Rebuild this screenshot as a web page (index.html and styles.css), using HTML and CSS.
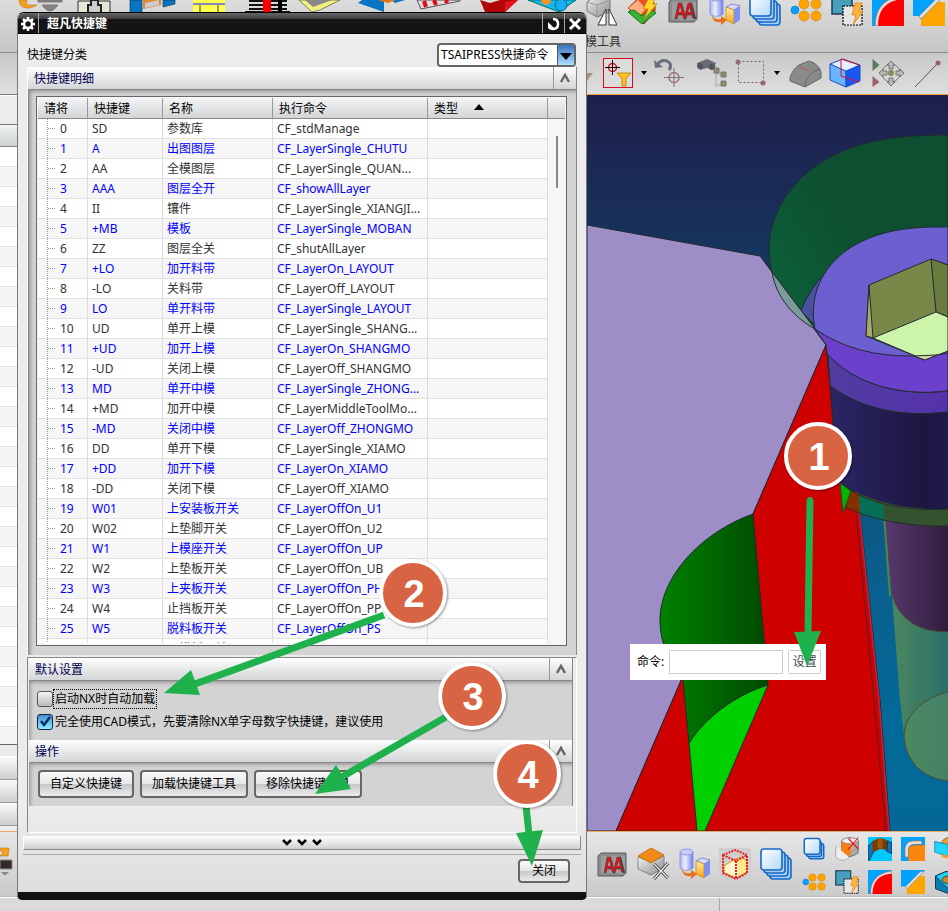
FILE: index.html
```
<!DOCTYPE html>
<html lang="zh-CN">
<head>
<meta charset="utf-8">
<title>超凡快捷键</title>
<link rel="stylesheet" href="styles.css">
</head>
<body>
<svg class="defs" aria-hidden="true">
  <defs>
    <linearGradient id="gBlue" x1="0" y1="0" x2="1" y2="1"><stop offset="0" stop-color="#fff"/><stop offset="1" stop-color="#b4d8fa"/></linearGradient>
    <linearGradient id="gPrism" x1="0" y1="0" x2="1" y2="0"><stop offset="0" stop-color="#a9b4f4"/><stop offset=".4" stop-color="#eef0ff"/><stop offset="1" stop-color="#6f80ee"/></linearGradient>
    <linearGradient id="gGold" x1="0" y1="0" x2="0" y2="1"><stop offset="0" stop-color="#fff0a0"/><stop offset="1" stop-color="#f9a010"/></linearGradient>
    <linearGradient id="gGrey" x1="0" y1="0" x2="1" y2="1"><stop offset="0" stop-color="#f4f4f4"/><stop offset="1" stop-color="#8a8a8a"/></linearGradient>
    <symbol id="i-aa" viewBox="0 0 32 32"><path d="M2 8l3-3h25v20l-3 3H2z" fill="#8c8c8c" stroke="#5a5a5a"/><path d="M5 8h24v18l-24-1z" fill="#9c9c9c"/><path d="M9 25L12 10h2l4 15M10 20h6M18 25l4-15h2l4 15M20 20h6" fill="none" stroke="#444" stroke-width="2.500"/><path d="M9 24L12.500 10h1L17 24M10.500 19h5M18 24l3.500-14h1L26 24M19.500 19h5" fill="none" stroke="#d8141c" stroke-width="1.800"/></symbol>
    <symbol id="i-prism" viewBox="0 0 32 32"><path d="M2 4v16c2 3 10 3 13 0V4z" fill="url(#gPrism)" stroke="#7583d6" stroke-width=".7"/><ellipse cx="8.500" cy="4" rx="6.500" ry="3" fill="#c4cdfa" stroke="#7583d6" stroke-width=".7"/><path d="M18 13l6-3 8 2-6 4z" fill="#d8dcff" stroke="#5c6ac0" stroke-width=".7"/><path d="M18 13l8 3v14l-8-4z" fill="url(#gGold)" stroke="#c98210" stroke-width=".7"/><path d="M26 16l6-4v14l-6 4z" fill="#7d91ef"/><path d="M4 20c1 5 5 6 9 5v-3l6 4-6 5v-3C6 29 4 25 4 20z" fill="#e8701c"/></symbol>
    <symbol id="i-stack" viewBox="0 0 32 32"><g fill="#a9cdf0" stroke="#1468c8" stroke-width="1.600"><rect x="10" y="10" width="21" height="21" rx="3"/><rect x="7" y="7" width="21" height="21" rx="3"/><rect x="4" y="4" width="21" height="21" rx="3"/><rect x="1" y="1" width="21" height="21" rx="3" fill="url(#gBlue)"/></g></symbol>
    <symbol id="i-stack2" viewBox="0 0 32 32"><g fill="#a9cdf0" stroke="#1468c8" stroke-width="2"><rect x="9" y="9" width="20" height="20" rx="3"/><rect x="6" y="6" width="20" height="20" rx="3"/><rect x="3" y="2" width="21" height="21" rx="3" fill="url(#gBlue)"/></g></symbol>
    <symbol id="i-dots" viewBox="0 0 32 32"><g fill="#ffa200" stroke="#d08000" stroke-width=".6"><circle cx="14" cy="10" r="5"/><circle cx="26" cy="10" r="5"/><circle cx="14" cy="22" r="5"/><circle cx="26" cy="22" r="5"/></g><circle cx="5" cy="16" r="4" fill="#08a0f8" stroke="#0878c0" stroke-width=".6"/></symbol>
    <symbol id="i-flash" viewBox="0 0 32 32"><rect x="1" y="1" width="20" height="19" fill="#46a0bd" stroke="#1c3c50" stroke-width="1.500"/><rect x="12" y="12" width="19" height="19" fill="#e6e6e6" stroke="#000" stroke-width="1.200" stroke-dasharray="2 1"/><path d="M24 9h7l-3 8h4L22 31l3-10h-4z" fill="#ffb43c" stroke="#d87810" stroke-width=".7"/></symbol>
    <symbol id="i-redcorner" viewBox="0 0 32 32"><path d="M0 0h32v32H0z" fill="#00a2ff"/><path d="M3 32C3 14 12 4 32 1v31z" fill="#d9d9d9" stroke="#777"/><path d="M6 32C6 16 14 6 32 5v27z" fill="#fe0000"/></symbol>
    <symbol id="i-chamfer" viewBox="0 0 32 32"><path d="M0 0h32L14 22H0z" fill="#00a2ff"/><path d="M8 32V24L24 8h8v24z" fill="#ffa400"/><path d="M6 22L26 2h5L8 25z" fill="#ddd" stroke="#888" stroke-width=".8"/></symbol>
    <symbol id="i-orangecorner" viewBox="0 0 32 32"><path d="M0 0h32v32H0z" fill="#00a2ff"/><path d="M5 27V17Q5 5 17 5h11v5H18q-8 0-8 8v9z" fill="#dedede" stroke="#666"/><path d="M10 32V19q0-8 9-8h13v21z" fill="#f8850c"/></symbol>
    <symbol id="i-bend" viewBox="0 0 32 32"><path d="M0 0h32v32H0z" fill="#00c8ff"/><path d="M0 12L8 5v13L2 31H0z" fill="#0878b8" stroke="#024"/><path d="M6 6Q17-3 27 6l-1 13q-8-7-16 0L6 20z" fill="#7c3c00"/><path d="M13 2h6v13h-6z" fill="#a05810"/><path d="M26 5l6 3v14l-7-3z" fill="#0878b8" stroke="#024"/></symbol>
    <symbol id="i-cyl" viewBox="0 0 32 32"><path d="M9 5v18q11 7 22-2V5q-11-8-22 0z" fill="#aaa" stroke="#555"/><ellipse cx="20" cy="5" rx="11" ry="4" fill="#eee" stroke="#777"/><path d="M9 7l12 3v14q-7 2-12-1z" fill="#f88010"/><path d="M1 12v15q9 8 18 0" fill="#eee" stroke="#777" stroke-dasharray="2 1"/><path d="M18 2l13 14M31 1L17 17" stroke="#f01010" stroke-width="1.500"/></symbol>
    <symbol id="i-delbox" viewBox="0 0 32 32"><path d="M1 9v12l13 6 13-7V8l-13 6z" fill="url(#gGrey)" stroke="#777" stroke-width=".8"/><path d="M1 8l13-8 13 7-13 8z" fill="#f08a18" stroke="#c26200" stroke-width=".8"/><path d="M17 16l14 14M31 15L17 31" stroke="#333" stroke-width="3"/><path d="M17 16l14 14M31 15L17 31" stroke="#eee" stroke-width="1.400"/></symbol>
    <symbol id="i-redbox" viewBox="0 0 32 32"><path d="M5 18l9-6 8-3 6 4v11l-11 6-12-5z" fill="#ffe78a" stroke="#cc9524"/><path d="M7 17l8-4 4 5v11L6 24z" fill="#fff8cc"/><path d="M4 7l12-5 12 5v18l-11 6-13-6zM4 7l13 6 11-6M17 13v18" fill="none" stroke="#ed1c24" stroke-width="2" stroke-dasharray="2 1"/></symbol>
    <symbol id="i-slab" viewBox="0 0 32 32"><path d="M2 8l14-6 16 3v22l-14 4L2 25z" fill="#077fae" stroke="#013"/><path d="M2 8l14-6 16 3v16l-14 3z" fill="#20d0f0" stroke="#024"/><ellipse cx="19" cy="13" rx="8" ry="5" fill="#c78a30" stroke="#320"/></symbol>
    <symbol id="i-joint" viewBox="0 0 32 32"><circle cx="19" cy="10" r="9" fill="#f0a030" stroke="#555"/><path d="M1 6l18 4v16L1 20z" fill="#22d4ff" stroke="#067a9c"/><path d="M11 24q6 6 16-3" fill="none" stroke="#f0a030" stroke-width="4"/></symbol>
    <symbol id="i-mirror" viewBox="0 0 32 32"><path d="M2 8l10-7 13 5v12l-13 5L2 17z" fill="url(#gGrey)" stroke="#777"/><path d="M2 8l10 3 13-5M12 11v12" fill="none" stroke="#999"/><path d="M21 15v16h-8zM24 15v16h8z" fill="#fff" stroke="#333"/></symbol>
    <symbol id="i-multi" viewBox="0 0 32 32"><path d="M2 14l13-12 14 8v7L18 30z" fill="#e8501c" stroke="#a03010"/><path d="M2 14l10-8 8 9-6 6z" fill="#fcae80"/><path d="M2 18l14 12 14-11-6-4-8 7-8-6z" fill="#38b434" stroke="#187818"/><path d="M23 3h6l-2 7h4L18 25l4-10h-5z" fill="#ffd52a" stroke="#c87000" stroke-width=".7"/></symbol>
    <linearGradient id="sBg" x1="0" y1="0" x2="0" y2="1"><stop offset="0" stop-color="#1f1e4b"/><stop offset=".22" stop-color="#16355f"/><stop offset=".62" stop-color="#0b5c8a"/><stop offset=".85" stop-color="#036a99"/><stop offset="1" stop-color="#046797"/></linearGradient>
    <linearGradient id="sDome" x1="0" y1="1" x2="1" y2="0"><stop offset="0" stop-color="#0a6a3e"/><stop offset=".6" stop-color="#0e4e31"/></linearGradient>
    <linearGradient id="sShaft"><stop offset="0" stop-color="#2b2566"/><stop offset=".8" stop-color="#1c1640"/><stop offset="1" stop-color="#201a4c"/></linearGradient>
    <linearGradient id="sGreen"><stop offset="0" stop-color="#008200"/><stop offset="1" stop-color="#004a00"/></linearGradient>
    <linearGradient id="sPlum"><stop offset="0" stop-color="#5a396f"/><stop offset="1" stop-color="#2f1d3c"/></linearGradient>
    <linearGradient id="sTeal" x1="0" y1="0" x2="1" y2="0"><stop offset="0" stop-color="#4f8a5e"/><stop offset="1" stop-color="#2c6f68"/></linearGradient>
    <linearGradient id="sLens"><stop offset="0" stop-color="#4c8a5e"/><stop offset="1" stop-color="#44806a"/></linearGradient>
    <linearGradient id="sRim"><stop offset="0" stop-color="#513ca0"/><stop offset="1" stop-color="#5532ab"/></linearGradient>
  </defs>
</svg>

<div class="app">
  <header class="ribbon">
    <svg class="ribbon-strip" viewBox="0 0 585 26" aria-hidden="true">
      <path d="M19 0h8l-1 5h11q-8 5-14 2-4-2-4-7z" fill="#f4a020" stroke="#c47808" stroke-width=".6"/><path d="M38 0h24v2H38zM42 5h16q-4 6-8 6t-8-6z" fill="#8b8181" stroke="#777"/>
      <path d="M78 1h32v14H78z" fill="#e6e6d6" stroke="#333"/><path d="M88 15V5h3V0h7v5h3v10" fill="#ccc" stroke="#222" stroke-width="2"/>
      <path d="M130 0h12v13h-12zM163 0h12v4l-12 3z" fill="#0874c4" stroke="#034" stroke-width=".6"/><path d="M143 0h18v5l-18 4z" fill="#e08830"/><path d="M145 3l14-3v5l-14 3z" fill="#ccc"/>
      <path d="M193 0h32v3h-32zM193 5h32v8h-32z" fill="#ffff4c"/><path d="M193 4h32M200 5v8M218 5v8" stroke="#34348c"/>
      <path d="M249 1h38M249 5h38M249 9h38M245 12h45" stroke="#111" stroke-width="2"/><path d="M263 0h8v12h-8z" fill="#f00"/><path d="M280 0v12" stroke="#000" stroke-width="4"/>
      <path d="M299 0l13 12 8-2 20-10z" fill="#f2f080" stroke="#554" stroke-width=".7"/><path d="M305 0l8 7 19-7z" fill="#888"/>
      <path d="M358 3l26 9V0h-22zM395 3l10-3h-14z" fill="#0874c4"/><path d="M378 0h18l-8 3z" fill="#e07818"/>
      <path d="M417 0l4 9 39-8V0z" fill="#ddd" stroke="#555"/><path d="M424 1l2 6M434 0l2 5M446 0l1 3" stroke="#e00c14" stroke-width="4"/>
      <path d="M480 0l5 12h20l13-12z" fill="#b00606"/><path d="M480 0l10 3 10-3z" fill="#ddd"/><path d="M505 2l13-2-13 12z" fill="#e8141c"/>
      <path d="M528 0l31 12 17-12z" fill="#12baf4" stroke="#076"/><circle cx="546" cy="0" r="5" fill="#f79520"/><circle cx="561" cy="5" r="6" fill="#18acf0" stroke="#067"/>
    </svg>
    <div class="ribbon-group">
      <div class="icons">
        <svg><use href="#i-mirror"/></svg><svg><use href="#i-multi"/></svg><svg><use href="#i-aa"/></svg><svg><use href="#i-prism"/></svg><svg><use href="#i-stack"/></svg><svg><use href="#i-dots"/></svg><svg><use href="#i-flash"/></svg><svg><use href="#i-redcorner"/></svg><svg><use href="#i-chamfer"/></svg>
      </div>
      <span class="group-label">模工具</span>
    </div>
  </header>

  <div class="selbar">
    <svg viewBox="585 53 363 41" aria-hidden="true">
      <path d="M586 73h7l-7 9z" fill="#a8977c"/>
      <rect x="603.500" y="58.500" width="29" height="29" fill="#dcdcdc" stroke="#d40c1c"/>
      <circle cx="612.500" cy="67.500" r="4" fill="none" stroke="#d40c1c" stroke-width="1.500"/><path d="M612.500 60v15M605 67.500h15" stroke="#000"/>
      <path d="M617 73h14l-5 6v7h-4v-7z" fill="#ffc020" stroke="#a86f00" stroke-width=".7"/>
      <path d="M641 71h6l-3 4zM774 71h6l-3 4z" fill="#000"/>
      <path d="M657 65q4-6 10-4 6 3 2 9" fill="none" stroke="#686e80" stroke-width="3"/><path d="M654 60l1 8 8-1z" fill="#686e80"/>
      <circle cx="674" cy="77.500" r="5" fill="none" stroke="#a87070" stroke-width="1.500"/><path d="M674 68v19M664 77.500h20" stroke="#777"/>
      <path d="M697 63l10-4 9 4-3 7-6-2-7 2z" fill="#686b75"/><circle cx="700" cy="66" r="3" fill="#4e5360"/><circle cx="712" cy="67" r="3" fill="#4e5360"/>
      <path d="M716 66v21M716 74h5M716 85h5" stroke="#aaa"/><path d="M714 68h5v5h-5zM721 72h5v5h-5zM721 81h5v5h-5z" fill="#8e8c62" stroke="#777"/>
      <rect x="738.500" y="61.500" width="25" height="21" fill="none" stroke="#666" stroke-dasharray="2 2"/><circle cx="738" cy="62" r="2.500" fill="#98686a"/><circle cx="763" cy="83" r="2.500" fill="#98686a"/>
      <path d="M790 78q2-8 9-13l10-4 5 2q7 5 7 10v5l-16 9-15-6z" fill="#8a8a8a" stroke="#666"/><path d="M805 86q1-13 15-17" fill="none" stroke="#666"/><path d="M799 66l9 5" stroke="#c05048"/>
      <path d="M830 64l13-5 17 6-14 7z" fill="#e4f0ff" stroke="#1850c0"/><path d="M830 64l16 7v16l-16-7z" fill="#6cb4ff" stroke="#1850c0"/><path d="M846 71l14-6v16l-14 6z" fill="#1c58f0" stroke="#1850c0"/><path d="M841 59v17l18 6M841 59l18 6" fill="none" stroke="#e80c24"/>
      <path d="M872.500 59l7 6-7 6z" fill="#567c5e"/><path d="M872.500 76l7 6-7 5z" fill="#9c6468"/><circle cx="891" cy="73" r="9" fill="none" stroke="#777"/><circle cx="891" cy="73" r="3" fill="#8e8a58"/>
      <path d="M891 61l4 4h-2v4h-4v-4h-2zM891 86l4-4h-2v-4h-4v4h-2zM879 73l4-4v2h4v4h-4v2zM904 73l-4-4v2h-4v4h4v2z" fill="#b8b8b8" stroke="#555" stroke-width=".7"/>
      <path d="M915 87l22-23" stroke="#555"/><circle cx="938" cy="63" r="2.500" fill="#985e60"/>
    </svg>
  </div>

  <main class="workspace">
    <aside class="navigator">
      <div class="nav-title"></div>
      <div class="nav-head"></div>
      <div class="nav-rows"></div>
      <div class="nav-gap"></div>
      <div class="nav-panel"></div>
      <div class="nav-panel"></div>
      <div class="nav-panel"></div>
    </aside>
    <section class="viewport">
      <svg class="scene" viewBox="587 95 361 736" preserveAspectRatio="xMidYMid slice" aria-hidden="true">
        <path d="M587 95h361v736H587z" fill="url(#sBg)"/>
        <path d="M884 500L892 596 900 700 905 745Q912 775 948 781V500z" fill="url(#sTeal)"/>
        <path d="M948 692C920 699 904 716 904 738 908 766 925 778 948 781z" fill="url(#sLens)"/>
        <path d="M884 515L892 595Q903 632 948 632V515z" fill="url(#sPlum)"/>
        <path d="M892 595Q903 632 948 632M948 692C920 699 904 716 904 738 908 766 925 778 948 781" fill="none" stroke="#4d4a30"/>
        <path d="M883 500l7 96" stroke="#4b8a40" stroke-width="2"/>
        <g stroke="#222a30" stroke-width="1">
          <path d="M772 272C763 236 775 200 810 170 850 140 895 135 948 135V420H826z" fill="url(#sDome)"/>
          <path d="M801 311C812 280 845 245 895 232Q915 227 948 228V340H830z" fill="#4b4f9f"/>
          <path d="M815 329C805 280 840 227 935 227H948V360H830z" fill="#6c5fcf"/>
          <path d="M869 285l62-26 17 6v86l-23 9-59-24z" fill="#788848"/>
          <path d="M931 259l5 53 12 5v-52z" fill="#6a7b3e"/>
          <path d="M869 285l-3 51 7 2z" fill="#a8a868"/>
          <path d="M873 338l63-26 12 5v34l-23 9z" fill="#cdf5aa"/>
          <path d="M815 329Q855 357 914 356L925 360 937 355 948 353V391C900 397 855 384 828 355z" fill="#6b41cb"/>
          <path d="M914 356l23-1-12 5z" fill="#d5d5a0"/>
          <path d="M828 355C855 384 900 397 948 391V412C900 418 860 408 830 386z" fill="url(#sRim)"/>
          <path d="M830 386C860 408 900 418 948 412V509C905 512 865 503 840 483L833 424z" fill="url(#sShaft)"/>
          <path d="M760 256L826 345 815 329C790 315 775 295 772 272z" fill="#7c999c"/>
          <path d="M587 225l173 31 66 89-73 169-137 317h-29z" fill="#9d8ec7"/>
          <path d="M772 272C776 298 795 318 815 329z" fill="#7c999c"/>
          <path d="M826 345l4 41 3 38 7 59 18 12 22 205 10 131H616l137-317z" fill="#cf0000"/>
          <path d="M753 514C700 533 659 578 660 622 660 645 672 665 683 680L689 743C705 718 735 695 768 685z" fill="url(#sGreen)"/>
          <path d="M689 743C705 718 735 695 768 685L705 831h-8z" fill="#00cf00"/>
        </g>
        <path d="M857 492l22 208 10 131" fill="none" stroke="#ad2950" stroke-width="1.500"/>
        <path d="M854 491l20 209 12 131" fill="none" stroke="#522"/>
        <path d="M851 490C880 503 905 510 948 509V526C905 527 870 517 843 506z" fill="#35522f"/>
        <path d="M858 495l25 10 2 16-26-8z" fill="#066f58"/>
        <path d="M851 490l8 5 1 18-14-6z" fill="#853000"/>
        <path d="M843 506C870 519 905 527 948 526M840 483C865 503 905 512 948 509" fill="none" stroke="#203020"/>
        <path d="M840 483l11 8-8 22z" fill="#00b400" stroke="#264020"/>
      </svg>
      <form class="command">
        <label for="cmd">命令:</label>
        <input id="cmd" type="text">
        <button type="button">设置</button>
      </form>
    </section>
  </main>

  <footer class="toolbar">
    <svg class="toolbar-left" viewBox="0 832 18 64" aria-hidden="true"><path d="M0 848h9l-1 8H0l3-3-3-3z" fill="#f4a020" stroke="#b07818" stroke-width=".6"/><path d="M0 860h12v9H0z" fill="#332a2a" stroke="#888"/><path d="M1 872h8q-3 4-5 3z" fill="#888"/></svg>
    <div class="icons">
      <svg><use href="#i-aa"/></svg><svg><use href="#i-delbox"/></svg><svg><use href="#i-prism"/></svg><svg class="active"><use href="#i-redbox"/></svg><svg><use href="#i-stack"/></svg>
    </div>
    <div class="icons-small">
      <svg><use href="#i-stack2"/></svg><svg><use href="#i-cyl"/></svg><svg><use href="#i-bend"/></svg><svg><use href="#i-orangecorner"/></svg><svg><use href="#i-joint"/></svg>
      <svg><use href="#i-dots"/></svg><svg><use href="#i-flash"/></svg><svg><use href="#i-redcorner"/></svg><svg><use href="#i-chamfer"/></svg><svg><use href="#i-slab"/></svg>
    </div>
  </footer>
  <div class="status"><span></span></div>
</div>

<section class="dialog" role="dialog" aria-labelledby="dlg-title">
  <header class="titlebar">
    <span class="gear"><svg viewBox="0 0 16 16"><circle cx="8" cy="8" r="4" fill="none" stroke="#fff" stroke-width="2.500"/><path d="M8 1v3M8 12v3M1 8h3M12 8h3M3 3l2 2M11 11l2 2M13 3l-2 2M5 11l-2 2" stroke="#fff" stroke-width="2.500"/></svg></span>
    <h1 id="dlg-title">超凡快捷键</h1>
    <button type="button" aria-label="重置"><svg viewBox="0 0 16 16"><path d="M8 3q5 0 5 5t-5 5q-3 0-4-2" fill="none" stroke="#fff" stroke-width="2.500"/><path d="M3 6v6h6z" fill="#fff"/></svg></button>
    <button type="button" aria-label="关闭窗口"><svg viewBox="0 0 16 16"><path d="M3 3l10 10M13 3L3 13" stroke="#fff" stroke-width="3"/></svg></button>
  </header>
  <div class="dialog-body">
    <div class="category">
      <label for="cat">快捷键分类</label>
      <span class="combo"><select id="cat"><option>TSAIPRESS快捷命令</option></select></span>
    </div>

    <section class="panel detail">
      <header class="panel-head"><h2>快捷键明细</h2><button type="button" aria-label="收起"><svg viewBox="0 0 12 12"><path d="M2 10l4-7 4 7" fill="none" stroke="#666" stroke-width="2.500"/></svg></button></header>
      <div class="panel-body">
        <div class="tree">
          <table>
            <colgroup><col class="c-no"><col class="c-key"><col class="c-name"><col class="c-cmd"><col class="c-type"><col></colgroup>
            <thead><tr><th>请将</th><th>快捷键</th><th>名称</th><th>执行命令</th><th>类型 <i class="sort"></i></th><th></th></tr></thead>
            <tbody>
              <tr><td>0</td><td>SD</td><td>参数库</td><td>CF_stdManage</td><td></td><td></td></tr>
              <tr><td>1</td><td>A</td><td>出图图层</td><td>CF_LayerSingle_CHUTU</td><td></td><td></td></tr>
              <tr><td>2</td><td>AA</td><td>全模图层</td><td>CF_LayerSingle_QUAN...</td><td></td><td></td></tr>
              <tr><td>3</td><td>AAA</td><td>图层全开</td><td>CF_showAllLayer</td><td></td><td></td></tr>
              <tr><td>4</td><td>II</td><td>镶件</td><td>CF_LayerSingle_XIANGJI...</td><td></td><td></td></tr>
              <tr><td>5</td><td>+MB</td><td>模板</td><td>CF_LayerSingle_MOBAN</td><td></td><td></td></tr>
              <tr><td>6</td><td>ZZ</td><td>图层全关</td><td>CF_shutAllLayer</td><td></td><td></td></tr>
              <tr><td>7</td><td>+LO</td><td>加开料带</td><td>CF_LayerOn_LAYOUT</td><td></td><td></td></tr>
              <tr><td>8</td><td>-LO</td><td>关料带</td><td>CF_LayerOff_LAYOUT</td><td></td><td></td></tr>
              <tr><td>9</td><td>LO</td><td>单开料带</td><td>CF_LayerSingle_LAYOUT</td><td></td><td></td></tr>
              <tr><td>10</td><td>UD</td><td>单开上模</td><td>CF_LayerSingle_SHANG...</td><td></td><td></td></tr>
              <tr><td>11</td><td>+UD</td><td>加开上模</td><td>CF_LayerOn_SHANGMO</td><td></td><td></td></tr>
              <tr><td>12</td><td>-UD</td><td>关闭上模</td><td>CF_LayerOff_SHANGMO</td><td></td><td></td></tr>
              <tr><td>13</td><td>MD</td><td>单开中模</td><td>CF_LayerSingle_ZHONG...</td><td></td><td></td></tr>
              <tr><td>14</td><td>+MD</td><td>加开中模</td><td>CF_LayerMiddleToolMo...</td><td></td><td></td></tr>
              <tr><td>15</td><td>-MD</td><td>关闭中模</td><td>CF_LayerOff_ZHONGMO</td><td></td><td></td></tr>
              <tr><td>16</td><td>DD</td><td>单开下模</td><td>CF_LayerSingle_XIAMO</td><td></td><td></td></tr>
              <tr><td>17</td><td>+DD</td><td>加开下模</td><td>CF_LayerOn_XIAMO</td><td></td><td></td></tr>
              <tr><td>18</td><td>-DD</td><td>关闭下模</td><td>CF_LayerOff_XIAMO</td><td></td><td></td></tr>
              <tr><td>19</td><td>W01</td><td>上安装板开关</td><td>CF_LayerOffOn_U1</td><td></td><td></td></tr>
              <tr><td>20</td><td>W02</td><td>上垫脚开关</td><td>CF_LayerOffOn_U2</td><td></td><td></td></tr>
              <tr><td>21</td><td>W1</td><td>上模座开关</td><td>CF_LayerOffOn_UP</td><td></td><td></td></tr>
              <tr><td>22</td><td>W2</td><td>上垫板开关</td><td>CF_LayerOffOn_UB</td><td></td><td></td></tr>
              <tr><td>23</td><td>W3</td><td>上夹板开关</td><td>CF_LayerOffOn_PH</td><td></td><td></td></tr>
              <tr><td>24</td><td>W4</td><td>止挡板开关</td><td>CF_LayerOffOn_PP</td><td></td><td></td></tr>
              <tr><td>25</td><td>W5</td><td>脱料板开关</td><td>CF_LayerOffOn_PS</td><td></td><td></td></tr>
              <tr><td>26</td><td>W6</td><td>下模板开关</td><td>CF_LayerOffOn_DIE</td><td></td><td></td></tr>
            </tbody>
          </table>
          <span class="thumb"></span>
        </div>
      </div>
    </section>

    <div class="group">
      <section class="panel">
        <header class="panel-head"><h2>默认设置</h2><button type="button" aria-label="收起"><svg viewBox="0 0 12 12"><path d="M2 10l4-7 4 7" fill="none" stroke="#666" stroke-width="2.500"/></svg></button></header>
        <div class="panel-body settings">
          <label class="check"><input type="checkbox"><span class="focused">启动NX时自动加载</span></label>
          <label class="check"><input type="checkbox" checked><span>完全使用CAD模式，先要清除NX单字母数字快捷键，建议使用</span></label>
        </div>
      </section>
      <section class="panel">
        <header class="panel-head"><h2>操作</h2><button type="button" aria-label="收起"><svg viewBox="0 0 12 12"><path d="M2 10l4-7 4 7" fill="none" stroke="#666" stroke-width="2.500"/></svg></button></header>
        <div class="panel-body actions">
          <button type="button" class="btn">自定义快捷键</button>
          <button type="button" class="btn">加载快捷键工具</button>
          <button type="button" class="btn">移除快捷键工具</button>
        </div>
      </section>
    </div>

    <button type="button" class="expander" aria-label="展开"><svg viewBox="0 0 42 8"><path d="M2 1l4 4 4-4M17 1l4 4 4-4M32 1l4 4 4-4" fill="none" stroke="#000" stroke-width="2.500"/></svg></button>
    <div class="dialog-foot"><button type="button" class="btn small">关闭</button></div>
  </div>
</section>

<svg class="callouts" width="948" height="911" viewBox="0 0 948 911">
  <g fill="#1fb14c" stroke="#1fb14c">
    <path d="M810 500l-2 134M384 615L195 684M446 717L340 778M526 806l3 28" fill="none" stroke-width="7"/>
    <circle cx="810" cy="500" r="3" stroke="none"/>
    <path d="M794 632l27-1-14 35zM164 693l27-23 9 25zM315 794l21-29 15 24zM532 866l-16-33 27-3z" stroke="none"/>
  </g>
  <g class="badges" fill="#d96444" stroke="#fff" stroke-width="4">
    <circle cx="818" cy="456" r="32"/><circle cx="413" cy="593" r="32"/><circle cx="472" cy="696" r="32"/><circle cx="527" cy="774" r="32"/>
  </g>
  <g class="nums"><text x="819" y="470">1</text><text x="414" y="607">2</text><text x="473" y="710">3</text><text x="528" y="788">4</text></g>
</svg>
</body>
</html>
```
FILE: styles.css
```
* { box-sizing: border-box; }
body {
  margin: 0;
  overflow: hidden;
  font: 12px/20px "Noto Sans", "Noto Sans CJK SC", sans-serif;
  color: #000;
}
button, input, select { font: inherit; color: inherit; }
h1, h2 { margin: 0; font: inherit; }
svg { display: block; }
.defs { position: absolute; width: 0; height: 0; }

.app { display: flex; flex-direction: column; height: 100vh; background: #dadada; }
.ribbon {
  display: flex;
  height: 53px;
  overflow: hidden;
  background: linear-gradient(#dcdcdc, #c6c6c6);
  border-bottom: 1px solid #8c8c8c;
}
.ribbon-strip { flex: none; width: 585px; height: 26px; }
.icons { display: flex; gap: 9px; }
.icons svg { flex: none; width: 32px; height: 32px; }
.ribbon-group .icons { margin-top: -6px; }
.group-label { display: block; margin-top: 6px; color: #333; }
.selbar {
  height: 41px;
  padding-left: 585px;
  background: linear-gradient(#c9c9c9, #dedede);
}
.selbar svg { width: 363px; height: 41px; }

.workspace { flex: 1; display: flex; min-height: 0; }
.navigator { flex: none; display: flex; flex-direction: column; width: 587px; background: #ececec; border-top: 1px solid #777; }
.nav-title { height: 30px; border-bottom: 1px solid #777; border-top: 1px solid #fff; }
.nav-head { height: 22px; background: linear-gradient(#f2f3f4, #ccd0d0); border-bottom: 1px solid #888; }
.nav-rows {
  flex: 1;
  background: repeating-linear-gradient(#fff 0 19px, #e2e2e2 19px 20px, #f5f5f5 20px 39px, #e2e2e2 39px 40px);
  border-bottom: 1px solid #666;
}
.nav-gap { height: 12px; border-bottom: 1px solid #fff; }
.nav-panel { height: 23px; background: linear-gradient(#fafafa, #cdced0); border-bottom: 1px solid #999; }
.nav-panel:last-child { margin-bottom: 5px; }
.viewport { position: relative; flex: 1; min-width: 0; border-top: 1px solid #f39c3c; }
.scene { width: 100%; height: 100%; }
.command {
  position: absolute;
  left: 43px;
  top: 549px;
  display: flex;
  align-items: center;
  gap: 5px;
  padding: 6px 5px 6px 7px;
  background: #fff;
}
.command input { width: 114px; height: 24px; border: 1px solid #ccc; background: #fff; }
.command button { width: 33px; height: 24px; padding: 0; border: 1px solid #ccc; border-radius: 2px; background: #fff; color: #444; }

.toolbar {
  display: flex;
  height: 66px;
  padding-top: 5px;
  background: linear-gradient(#e6e6e6, #cacaca);
  border-top: 1px solid #f0a860;
  border-bottom: 1px solid #bbb;
  overflow: hidden;
}
.toolbar-left { flex: none; width: 18px; height: 64px; margin: -5px 578px 0 0; }
.toolbar .icons { padding-top: 11px; }
.active { background: #d0cfcf; }
.icons-small { display: grid; grid-template-columns: repeat(5, 24px); gap: 6px 9px; margin-left: 10px; }
.icons-small svg { width: 24px; height: 24px; }
.status { height: 14px; background: #dadada; border-top: 1px solid #fff; }
.status span { display: block; width: 720px; height: 13px; border-right: 1px solid #aaa; }

.dialog {
  position: absolute;
  left: 17px;
  top: 12px;
  width: 570px;
  background: #ebebeb;
  border: 1px solid #777;
  border-top-color: #000;
  border-bottom: 8px solid #111;
  border-radius: 7px 7px 5px 5px;
}
.titlebar {
  display: flex;
  height: 21px;
  background: linear-gradient(#666, #3c3c3c 30%, #141414 31%);
  border-bottom: 1px solid #000;
  border-radius: 6px 6px 0 0;
  color: #fff;
}
.titlebar h1 { flex: 1; padding-left: 8px; font-weight: bold; line-height: 21px; }
.gear { width: 21px; padding: 3px 2px; border-right: 1px solid #aaa; }
.titlebar svg { width: 16px; height: 16px; }
.titlebar button { width: 22px; padding: 1px 3px 0 2px; border: 0; border-left: 1px solid #aaa; background: none; }
.dialog-body { padding: 9px 5px; background: linear-gradient(#ececec 90%, #dedede); }
.category { display: flex; align-items: center; justify-content: space-between; height: 24px; padding: 0 5px 0 4px; }
.combo { position: relative; }
.combo::after {
  content: "";
  position: absolute;
  right: 2px;
  top: 2px;
  width: 16px;
  height: 20px;
  background: linear-gradient(#3c72c0, #aee0ff);
  border-left: 1px solid #555;
  pointer-events: none;
}
.combo::before {
  content: "";
  position: absolute;
  z-index: 1;
  right: 4px;
  top: 10px;
  border: 6px solid transparent;
  border-top: 7px solid #000;
  border-bottom: 0;
  pointer-events: none;
}
.combo select {
  display: block;
  width: 139px;
  height: 24px;
  padding: 0 18px 0 2px;
  appearance: none;
  background: #fff;
  border: 2px solid #666;
  border-radius: 4px;
}

.panel-head {
  display: flex;
  height: 23px;
  background: linear-gradient(#fff, #f0f1f1 30%, #d3d5d6);
  border-bottom: 1px solid #888;
  color: #000050;
}
.panel-head h2 { flex: 1; padding-left: 6px; line-height: 24px; }
.panel-head button { width: 23px; padding: 5px; border: 0; border-left: 1px solid #999; background: none; }
.panel-head svg { width: 12px; height: 12px; }
.panel-body { background: #d3d3d3; box-shadow: inset 3px 3px 4px -2px #888; }
.detail { margin: 0 4px; border-left: 1px solid #fff; border-right: 1px solid #888; }
.detail .panel-body { padding: 6px 9px 9px 7px; border-left: 1px solid #888; }
.tree {
  position: relative;
  height: 550px;
  padding: 1px 1px 2px;
  overflow: clip;
  overflow-clip-margin: content-box;
  background: #f6f6f6;
  border: 1px solid #666;
}
.tree table { width: 100%; table-layout: fixed; border-collapse: separate; border-spacing: 0; }
.c-no { width: 50px; }
.c-key { width: 75px; }
.c-name { width: 110px; }
.c-cmd { width: 155px; }
.c-type { width: 120px; }
th, td { padding: 0; white-space: nowrap; overflow: hidden; text-align: left; font-weight: normal; }
th {
  height: 21px;
  padding: 1px 0 0 6px;
  line-height: 19px;
  background: linear-gradient(#f4f5f6, #d2d4d5);
  border-right: 1px solid #999;
  border-bottom: 1px solid #888;
}
th:last-child { border-right: 0; }
.sort { display: inline-block; margin: 0 0 3px 13px; border: 5px solid transparent; border-top: 0; border-bottom: 6px solid #000; }
td { height: 20px; padding-left: 4px; line-height: 19px; color: #333; background: #fff; border-right: 1px solid #ddd; border-bottom: 1px solid #e2e2e2; }
tr:nth-child(even) td { color: #00f; background-color: #f6f6f6; }
td:last-child, tr:nth-child(even) td:last-child { background: #f6f6f6; border: 0; }
td:first-child {
  padding-left: 22px;
  background-image:
    repeating-linear-gradient(#999 0 1px, transparent 1px 2px),
    repeating-linear-gradient(90deg, #999 0 1px, transparent 1px 2px);
  background-size: 1px 20px, 8px 1px;
  background-position: 9px 0, 10px 9px;
  background-repeat: no-repeat;
}
.thumb { position: absolute; right: 8px; top: 39px; width: 2px; height: 52px; background: #888; }

.group {
  height: 176px;
  margin: 2px 4px 0;
  border: 1px solid #888;
  border-right-color: #fff;
  border-bottom-color: #fff;
}
.group .panel { margin: 0 3px 0 1px; border-right: 1px solid #888; }
.settings { height: 59px; padding: 6px 8px; }
.check { display: flex; align-items: center; height: 23px; line-height: 18px; }
.check span { padding: 0 1px; border: 1px solid transparent; }
.check .focused { border: 1px dotted #000; }
.check input {
  appearance: none;
  width: 16px;
  height: 16px;
  margin: 0;
  background: linear-gradient(#f4f4f4, #bbb);
  border: 1px solid #555;
  border-radius: 3px;
}
.check input:checked {
  background: url("data:image/svg+xml,%3Csvg xmlns='http://www.w3.org/2000/svg' viewBox='0 0 14 14'%3E%3Cpath d='M3 6l3 4 6-8' fill='none' stroke='%23063068' stroke-width='2.500'/%3E%3C/svg%3E"), linear-gradient(#4a8cd0, #8cf0ff);
  border-color: #124;
}
.actions { display: flex; gap: 6px; padding: 7px 9px 8px; }
.btn {
  height: 28px;
  padding: 0 10px;
  background: linear-gradient(#fafafa, #e6e6e6 50%, #c4c6c8 51%, #ececec);
  border: 2px solid #666;
  border-radius: 4px;
  line-height: 20px;
}
.btn.small { width: 52px; height: 24px; padding: 0; }
.expander {
  display: flex;
  justify-content: center;
  width: 100%;
  height: 14px;
  margin: 3px 0 4px;
  padding: 3px 0;
  background: linear-gradient(#fff, #cfd0d1);
  border: 1px solid #888;
  border-top: 0;
  border-left-color: #fff;
}
.expander svg { width: 42px; height: 8px; }
.dialog-foot { display: flex; justify-content: flex-end; padding: 4px 11px 0; border-top: 1px solid #aaa; }

.callouts { position: absolute; left: 0; top: 0; pointer-events: none; }
.badges { filter: drop-shadow(1px 1px 1px #0006); }
.nums { font: bold 38px "Liberation Sans", sans-serif; fill: #fff; text-anchor: middle; }
```
